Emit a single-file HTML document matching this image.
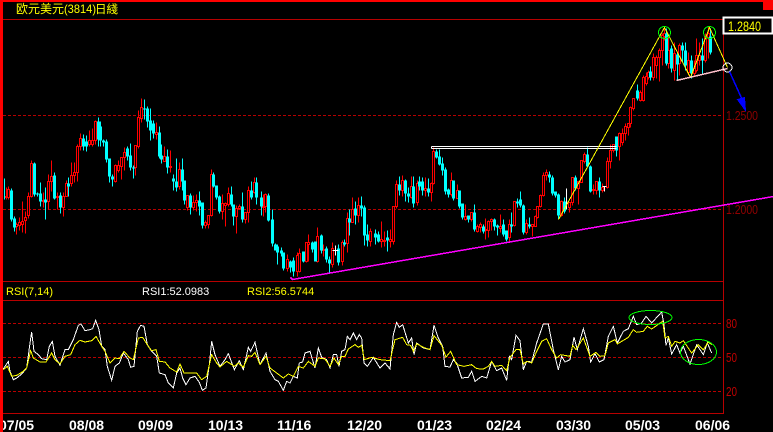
<!DOCTYPE html>
<html><head><meta charset="utf-8"><title>欧元美元(3814)日綫</title>
<style>
html,body{margin:0;padding:0;background:#000;width:773px;height:432px;overflow:hidden}
svg{display:block;position:absolute;left:0;top:0}
text{font-family:"Liberation Sans","WenQuanYi Zen Hei","Noto Sans CJK SC",sans-serif}
</style></head><body>
<svg width="773" height="432" viewBox="0 0 773 432" shape-rendering="crispEdges">
<rect width="773" height="432" fill="#000"/>
<g stroke="#b80000" fill="none" stroke-width="1">
<path d="M3 19.5H724"/>
<path d="M3 281.5H723M3 300.5H723M3 413.5H723"/>
<path d="M723.5 19V414"/>
<path stroke-dasharray="3 2" d="M3 115.5H723M3 209.5H723M3 323.5H723M3 357.5H723M3 391.5H723"/>
</g>
<g transform="translate(.5,.5)" fill="none">
<path stroke="#f00" d="M6 187V199M8 186V199M16 222V234M19 217V230M22 201V232M25 211V233M28 192V218M31 160V197M43 192V207M48 174V209M51 160V191M57 192V209M63 192V216M66 180V196M71 162V186M74 162V182M77 144V181M80 133V150M89 130V146M92 128V146M95 120V144M115 164V182M118 160V172M121 157V179M124 147V170M135 145V175M138 110V148M141 98V122M156 122V139M164 146V161M170 150V172M179 162V189M187 195V210M193 195V210M196 194V211M205 220V228M208 215V228M211 169V216M222 194V219M225 202V226M228 187V206M236 205V233M239 204V209M245 212V223M248 186V222M254 177V193M263 194V216M265 193V212M287 254V271M297 252V276M299 248V272M306 242V262M308 234V261M317 227V262M323 244V256M332 242V267M342 240V265M347 212V252M352 197V222M358 197V222M370 228V246M381 221V247M384 231V246M390 229V247M393 206V244M396 180V208M402 175V196M411 176V198M417 180V205M425 177V196M431 182V201M433 147V184M451 172V196M457 184V198M465 204V220M471 212V221M477 224V232M480 222V232M485 218V239M488 220V237M491 218V230M500 214V232M509 219V242M514 201V226M526 219V234M532 224V236M535 215V226M537 206V218M540 194V207M543 172V196M546 169V180M561 200V216M569 202V212M572 177V205M578 181V204M581 160V182M584 152V163M593 184V194M596 181V194M602 183V192M607 157V188M610 144V168M613 144V152M619 132V160M622 128V145M625 123V140M628 123V135M630 106V127M633 98V110M640 90V101M643 75V101M646 72V85M648 70V79M653 53V80M656 55V78M659 48V81M662 33V65M664 27V40M668 35V68M674 42V80M679 43V75M688 52V75M694 60V76M696 38V72M699 42V65M705 33V62M708 26V58"/>
<path stroke="#f00" fill="#000" d="M5 196h2V197h-2zM7 189h2V197h-2zM15 224h2V226h-2zM18 222h2V225h-2zM21 221h2V224h-2zM24 217h2V220h-2zM27 196h2V215h-2zM30 163h2V196h-2zM42 200h2V201h-2zM47 181h2V201h-2zM50 176h2V181h-2zM56 196h2V197h-2zM62 196h2V207h-2zM65 183h2V196h-2zM70 175h2V183h-2zM73 172h2V175h-2zM76 146h2V172h-2zM79 138h2V146h-2zM88 140h2V144h-2zM91 140h2V144h-2zM94 121h2V140h-2zM114 165h2V181h-2zM117 165h2V170h-2zM120 157h2V166h-2zM123 152h2V157h-2zM134 145h2V167h-2zM137 117h2V146h-2zM140 107h2V118h-2zM155 132h2V134h-2zM163 156h2V161h-2zM169 166h2V167h-2zM178 169h2V186h-2zM186 195h2V207h-2zM192 202h2V207h-2zM195 200h2V202h-2zM204 222h2V225h-2zM207 215h2V224h-2zM210 174h2V215h-2zM221 203h2V211h-2zM224 203h2V205h-2zM227 193h2V204h-2zM235 208h2V216h-2zM238 206h2V208h-2zM244 212h2V219h-2zM247 190h2V212h-2zM253 182h2V192h-2zM262 206h2V207h-2zM264 194h2V206h-2zM286 259h2V268h-2zM296 255h2V271h-2zM298 253h2V271h-2zM305 242h2V261h-2zM307 242h2V244h-2zM316 236h2V261h-2zM322 249h2V250h-2zM331 248h2V264h-2zM341 242h2V261h-2zM346 218h2V243h-2zM351 209h2V222h-2zM357 205h2V215h-2zM369 231h2V241h-2zM380 239h2V241h-2zM383 240h2V241h-2zM389 239h2V241h-2zM392 206h2V241h-2zM395 184h2V206h-2zM401 180h2V190h-2zM410 186h2V197h-2zM416 183h2V202h-2zM424 188h2V190h-2zM430 183h2V192h-2zM432 151h2V183h-2zM450 180h2V194h-2zM456 190h2V198h-2zM464 216h2V219h-2zM470 212h2V219h-2zM476 226h2V231h-2zM479 224h2V227h-2zM484 229h2V230h-2zM487 221h2V230h-2zM490 219h2V221h-2zM499 226h2V228h-2zM508 224h2V237h-2zM513 201h2V225h-2zM525 223h2V232h-2zM531 224h2V226h-2zM534 216h2V226h-2zM536 206h2V217h-2zM539 195h2V206h-2zM542 175h2V195h-2zM545 172h2V175h-2zM560 201h2V215h-2zM568 202h2V207h-2zM571 177h2V202h-2zM577 181h2V188h-2zM580 160h2V182h-2zM583 154h2V161h-2zM592 189h2V190h-2zM595 181h2V190h-2zM601 187h2V190h-2zM606 161h2V187h-2zM609 150h2V161h-2zM612 144h2V150h-2zM618 133h2V146h-2zM621 133h2V142h-2zM624 126h2V133h-2zM627 123h2V127h-2zM629 107h2V123h-2zM632 98h2V108h-2zM639 92h2V100h-2zM642 77h2V100h-2zM645 76h2V83h-2zM647 72h2V77h-2zM652 57h2V77h-2zM655 57h2V65h-2zM658 50h2V57h-2zM661 35h2V50h-2zM663 33h2V36h-2zM667 50h2V63h-2zM673 53h2V70h-2zM678 45h2V63h-2zM687 60h2V72h-2zM693 68h2V73h-2zM695 55h2V70h-2zM698 55h2V60h-2zM704 36h2V60h-2zM707 33h2V37h-2z"/>
<path stroke="#00ffff" d="M4 178V199M11 188V221M14 216V231M34 162V196M37 192V196M40 182V206M45 187V219M54 172V199M60 192V213M68 177V196M83 134V150M86 135V151M98 117V146M100 121V146M103 139V146M106 139V162M109 158V182M112 174V186M127 146V160M130 143V170M133 165V178M144 99V119M147 106V127M150 108V140M153 120V138M159 126V158M161 144V163M167 149V173M173 174V190M176 158V191M182 158V190M184 180V204M190 193V214M199 191V215M202 202V228M213 172V187M216 185V199M219 195V213M231 186V206M233 204V225M242 192V222M251 181V199M256 177V204M261 191V215M268 193V221M272 209V246M275 243V250M277 244V264M281 247V256M283 252V270M290 260V272M293 257V276M303 251V262M312 241V252M315 241V261M321 234V253M326 246V262M329 256V272M338 244V265M344 239V246M349 209V235M355 201V224M361 196V216M364 205V245M367 224V246M375 229V244M378 231V242M387 230V251M399 176V195M405 179V201M408 187V202M413 176V207M419 176V190M422 177V195M428 178V196M436 149V158M439 149V165M442 157V175M445 167V194M448 188V197M453 180V200M459 190V208M462 203V219M468 215V222M474 204V231M483 224V233M494 218V230M497 224V235M503 219V236M506 230V241M511 212V232M517 198V207M520 191V207M523 204V234M529 217V228M549 171V182M552 175V195M555 191V197M558 193V219M564 197V213M575 175V190M587 147V167M590 165V192M599 177V197M616 136V156M637 84V100M650 66V80M666 28V65M671 45V72M677 52V80M682 42V62M685 42V70M691 55V78M702 38V74M710 28V54"/>
<path stroke="#00ffff" stroke-width="3" d="M11 190V219M14 218V227M34 163V194M37 193V194M40 193V201M45 199V202M54 175V198M60 195V207M68 183V186M83 138V146M86 141V146M98 121V139M100 126V140M103 140V142M106 141V159M109 158V176M112 176V179M127 148V156M130 155V167M133 167V168M144 108V109M147 108V121M150 120V130M153 123V133M159 132V156M161 155V159M167 156V167M173 178V181M176 181V187M182 169V181M184 180V200M190 195V207M199 200V206M202 202V225M213 174V186M216 185V197M219 196V211M231 194V204M233 204V216M242 206V219M251 190V197M256 182V197M261 197V206M268 195V220M272 219V243M275 244V250M277 246V252M281 250V253M283 252V268M290 261V267M293 260V271M303 251V261M312 242V249M315 241V261M321 235V250M326 248V259M329 259V263M338 248V262M344 242V244M349 218V222M355 208V215M361 205V208M364 207V235M367 234V240M375 233V237M378 234V241M387 237V240M399 184V190M405 180V193M408 193V196M413 186V203M419 181V186M422 181V190M428 188V192M436 151V157M439 156V164M442 163V170M445 169V191M448 189V194M453 180V198M459 190V206M462 203V217M468 215V219M474 212V229M483 226V231M494 219V226M497 225V227M503 224V234M506 230V239M511 224V226M517 201V203M520 199V205M523 205V232M529 224V226M549 174V177M552 177V193M555 191V195M558 194V215M564 201V211M575 177V188M587 154V166M590 166V191M599 181V190M616 136V150M637 90V98M650 71V77M666 33V63M671 48V68M677 54V64M682 45V50M685 50V65M691 60V73M702 55V60M710 36V52"/>
<path stroke="#fff" d="M335 245V255M332 250H338M566 188V209M604 186V191M602 186H606"/>
<path stroke="#fff" d="M431 146H616M431 148H616M431 146V148"/>
<path stroke="#ff00ff" stroke-width="1.5" d="M290 277L292 279L773 196"/>
<path stroke="#ffff00" d="M558 219L664 27L690 77L709 27L727 67"/>
<path stroke="#ffc0cb" stroke-width="1.5" d="M676 80L727 68"/>
<circle cx="664" cy="32" r="6" stroke="#00ff00"/>
<circle cx="709" cy="32" r="6" stroke="#00ff00"/>
<circle cx="727" cy="67" r="4.5" stroke="#fff"/>
<path stroke="#0000ff" stroke-width="1.5" d="M729 71L743 102"/>
<path fill="#0000ff" stroke="#0000ff" d="M737 99L744 97L745 110Z"/>
</g>
<g transform="translate(0,288) scale(.33333)" fill="none" stroke-width="3">
<polyline stroke="#fff" points="10,243 25,220 30,250 40,275 50,270 65,258 80,240 90,165 95,132 102,190 115,200 125,212 140,215 148,175 157,160 165,205 180,232 195,185 205,185 220,155 235,112 243,108 255,128 270,125 278,122 287,97 297,125 305,175 315,185 322,235 335,277 345,235 358,225 370,195 385,215 392,238 402,235 412,130 422,112 432,115 442,170 455,190 470,205 478,255 495,260 505,285 520,300 530,255 540,240 548,270 558,290 570,270 585,265 598,283 607,307 618,300 628,230 635,160 645,200 660,235 675,215 685,197 703,245 718,218 730,245 745,178 752,190 765,163 780,230"/>
<polyline stroke="#ffff00" points="10,245 22,235 35,265 50,262 70,250 80,240 92,188 100,210 120,222 138,222 155,195 165,215 180,228 195,205 212,200 225,170 240,157 255,162 275,158 288,145 305,175 315,190 330,225 345,210 358,212 372,190 390,210 400,215 415,150 428,148 445,175 455,188 468,185 478,220 495,222 510,240 530,252 540,228 552,255 575,255 590,255 605,275 620,265 635,200 650,225 660,237 680,220 703,235 715,225 730,238 745,203 755,205 765,193 780,230"/>
<g transform="translate(780,0)">
<polyline stroke="#fff" points="0,230 18,195 30,250 45,275 55,280 70,307 80,280 90,285 100,265 112,270 118,225 128,222 135,195 150,190 165,240 175,180 185,208 200,215 210,240 220,200 230,200 237,235 245,190 255,185 262,145 270,155 280,135 290,155 298,140 305,150 312,225 322,235 340,208 360,240 375,225 390,243 400,140 410,103 418,118 428,110 445,165 455,150 462,200 470,165 490,180 510,185 522,112 535,150 548,175 555,235 570,237 580,215 590,225 605,270 625,268 635,250 645,280 665,265 680,270 695,220 710,248 725,240 740,277 748,205 755,215 768,142 780,158"/>
<polyline stroke="#ffff00" points="0,230 18,205 30,240 50,255 70,270 85,258 100,265 115,235 130,240 145,220 165,235 175,210 195,213 210,235 222,210 235,230 245,205 255,205 265,183 285,170 295,178 305,172 313,215 335,208 360,215 390,218 405,155 428,148 440,170 452,172 460,190 470,167 490,178 510,185 522,143 545,172 558,207 572,190 590,230 612,235 635,230 650,242 670,243 685,235 695,220 705,235 725,232 740,248 750,208 768,185 780,185"/>
</g>
<g transform="translate(1560,0)">
<polyline stroke="#fff" points="0,158 10,245 20,220 35,222 50,165 70,108 85,108 100,185 115,245 125,205 135,222 150,215 162,148 172,185 190,122 205,175 212,222 225,197 238,222 252,215 265,145 280,115 292,165 310,130 325,122 340,85 350,110 365,105 378,85 395,105 425,72 432,110 438,172 445,150 455,198 470,170 480,195 490,175 510,228 530,170 550,200 562,165 575,195"/>
<polyline stroke="#ffff00" points="0,185 10,228 20,220 35,225 50,190 65,160 80,152 95,185 110,210 122,200 150,205 158,172 168,185 190,150 210,205 228,193 240,205 255,203 265,165 285,155 292,168 325,148 340,125 350,133 370,130 382,115 395,123 428,100 435,150 445,145 455,175 465,160 480,165 490,158 515,195 535,170 550,185 565,162 575,170"/>
</g>
</g>
<g fill="none" stroke="#00ff00">
<ellipse cx="650.5" cy="317.5" rx="21.5" ry="7"/>
<ellipse cx="698.5" cy="352" rx="18" ry="12.5"/>
</g>
<rect x="0" y="0" width="773" height="2" fill="#f00"/>
<rect x="0" y="0" width="3" height="432" fill="#f00"/>
<rect x="763" y="2" width="10" height="8" fill="#f00"/>
<rect x="723.5" y="17.5" width="49" height="16" fill="#000" stroke="#fff" stroke-width="2"/>
</svg>
<svg width="773" height="432" viewBox="0 0 773 432">
<text x="16" y="13" font-size="12" fill="#ffff00">欧元美元</text>
<text x="64" y="13" font-size="12" fill="#ffff00" textLength="32" lengthAdjust="spacingAndGlyphs">(3814)</text>
<text x="95" y="13" font-size="11.5" fill="#ffff00">日綫</text>
<text x="728" y="31" font-size="14" fill="#ffff00" textLength="33" lengthAdjust="spacingAndGlyphs">1.2840</text>
<text x="726" y="120" font-size="13" fill="#900000" textLength="32" lengthAdjust="spacingAndGlyphs">1.2500</text>
<text x="726" y="214" font-size="13" fill="#900000" textLength="32" lengthAdjust="spacingAndGlyphs">1.2000</text>
<text x="726" y="328" font-size="13" fill="#c00000" textLength="11" lengthAdjust="spacingAndGlyphs">80</text>
<text x="726" y="362" font-size="13" fill="#c00000" textLength="11" lengthAdjust="spacingAndGlyphs">50</text>
<text x="726" y="396" font-size="13" fill="#c00000" textLength="11" lengthAdjust="spacingAndGlyphs">20</text>
<text x="6" y="295" font-size="11" fill="#ffff00">RSI(7,14)</text>
<text x="142" y="295" font-size="11" fill="#fff">RSI1:52.0983</text>
<text x="247" y="295" font-size="11" fill="#ffff00">RSI2:56.5744</text>
<g font-size="14" font-weight="bold" fill="#fff">
<text x="-1" y="430">07/05</text>
<text x="69" y="430">08/08</text>
<text x="138" y="430">09/09</text>
<text x="208" y="430">10/13</text>
<text x="277" y="430">11/16</text>
<text x="347" y="430">12/20</text>
<text x="417" y="430">01/23</text>
<text x="486" y="430">02/24</text>
<text x="556" y="430">03/30</text>
<text x="625" y="430">05/03</text>
<text x="695" y="430">06/06</text>
</g>
<rect x="0" y="410" width="3" height="22" fill="#f00"/>
</svg>
</body></html>
